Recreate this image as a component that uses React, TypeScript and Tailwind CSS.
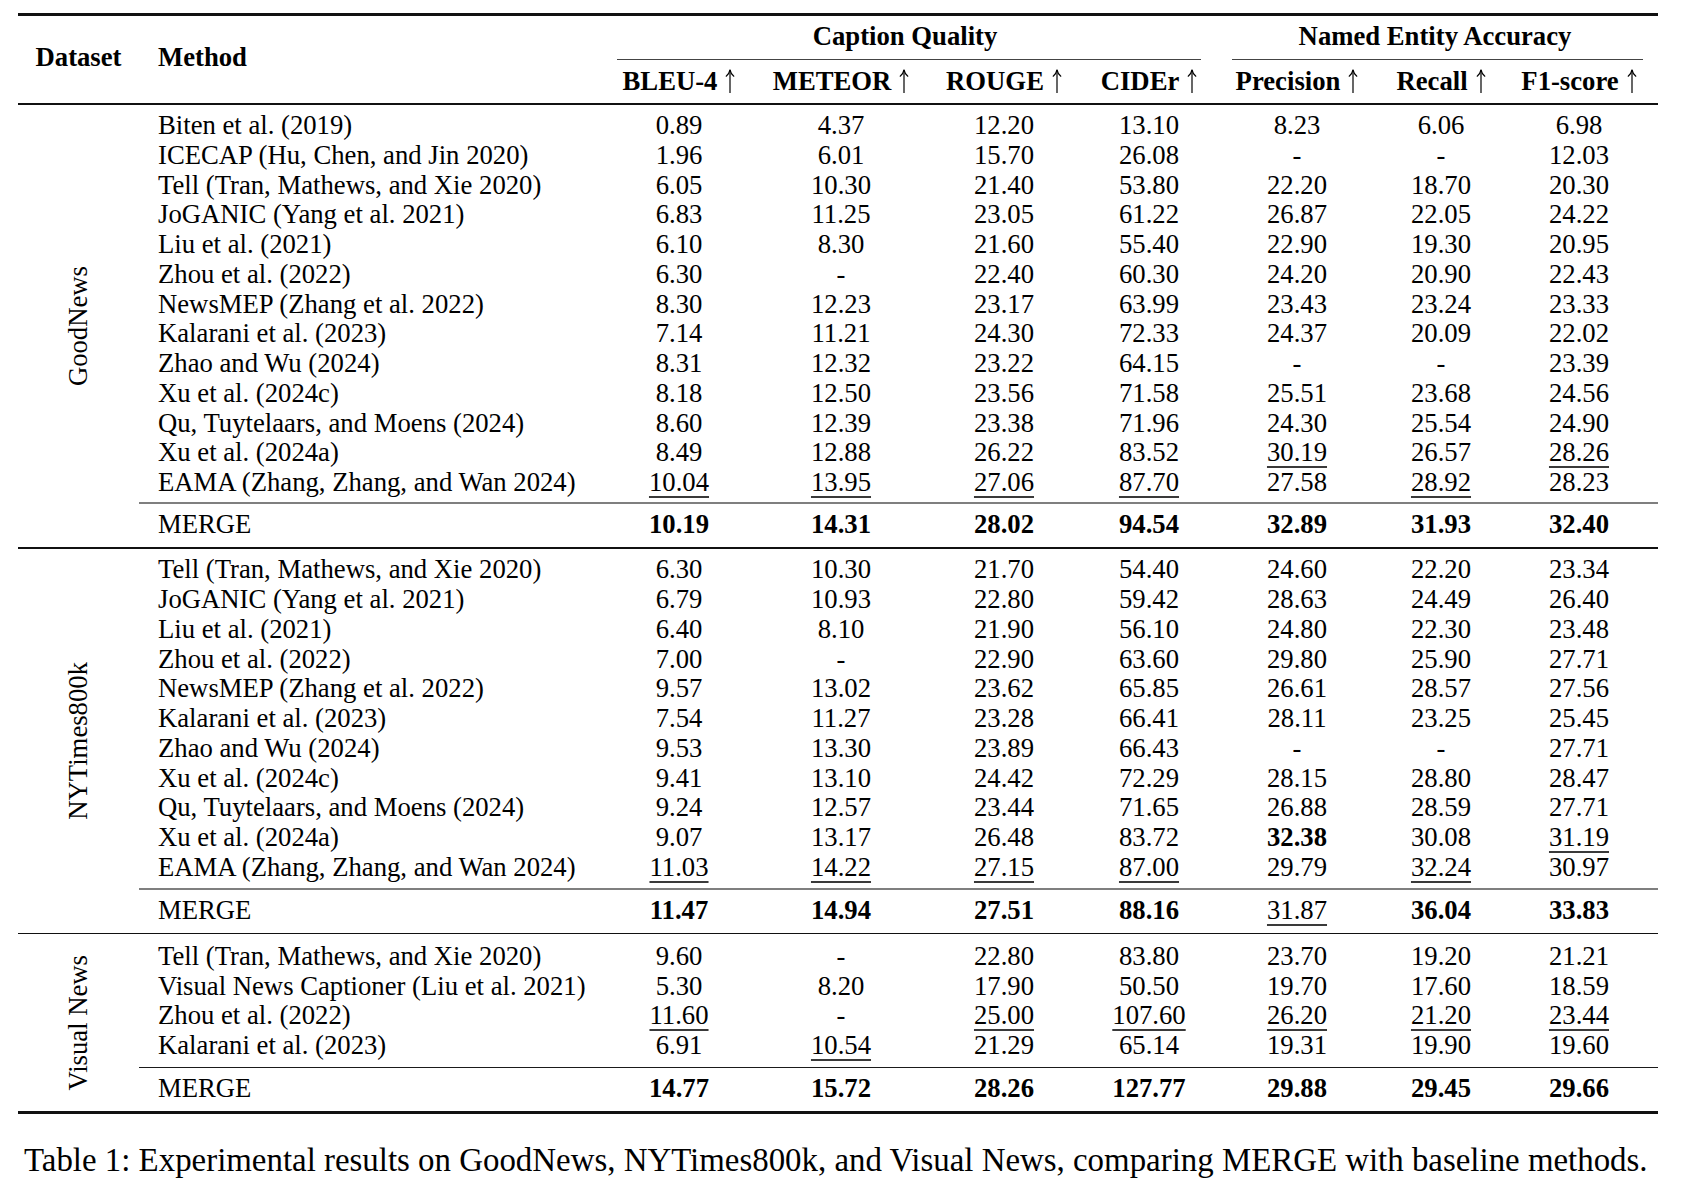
import React from "react";

const GRID = "grid grid-cols-[459px_162px_162px_164px_126px_170px_118px_158px]";

type RowData = [string, string[]];

const goodNews: RowData[] = [
  ["Biten et al. (2019)", ["0.89", "4.37", "12.20", "13.10", "8.23", "6.06", "6.98"]],
  ["ICECAP (Hu, Chen, and Jin 2020)", ["1.96", "6.01", "15.70", "26.08", "-", "-", "12.03"]],
  ["Tell (Tran, Mathews, and Xie 2020)", ["6.05", "10.30", "21.40", "53.80", "22.20", "18.70", "20.30"]],
  ["JoGANIC (Yang et al. 2021)", ["6.83", "11.25", "23.05", "61.22", "26.87", "22.05", "24.22"]],
  ["Liu et al. (2021)", ["6.10", "8.30", "21.60", "55.40", "22.90", "19.30", "20.95"]],
  ["Zhou et al. (2022)", ["6.30", "-", "22.40", "60.30", "24.20", "20.90", "22.43"]],
  ["NewsMEP (Zhang et al. 2022)", ["8.30", "12.23", "23.17", "63.99", "23.43", "23.24", "23.33"]],
  ["Kalarani et al. (2023)", ["7.14", "11.21", "24.30", "72.33", "24.37", "20.09", "22.02"]],
  ["Zhao and Wu (2024)", ["8.31", "12.32", "23.22", "64.15", "-", "-", "23.39"]],
  ["Xu et al. (2024c)", ["8.18", "12.50", "23.56", "71.58", "25.51", "23.68", "24.56"]],
  ["Qu, Tuytelaars, and Moens (2024)", ["8.60", "12.39", "23.38", "71.96", "24.30", "25.54", "24.90"]],
  ["Xu et al. (2024a)", ["8.49", "12.88", "26.22", "83.52", "_30.19", "26.57", "_28.26"]],
  ["EAMA (Zhang, Zhang, and Wan 2024)", ["_10.04", "_13.95", "_27.06", "_87.70", "27.58", "_28.92", "28.23"]],
];
const goodNewsMerge = ["*10.19", "*14.31", "*28.02", "*94.54", "*32.89", "*31.93", "*32.40"];

const nyt: RowData[] = [
  ["Tell (Tran, Mathews, and Xie 2020)", ["6.30", "10.30", "21.70", "54.40", "24.60", "22.20", "23.34"]],
  ["JoGANIC (Yang et al. 2021)", ["6.79", "10.93", "22.80", "59.42", "28.63", "24.49", "26.40"]],
  ["Liu et al. (2021)", ["6.40", "8.10", "21.90", "56.10", "24.80", "22.30", "23.48"]],
  ["Zhou et al. (2022)", ["7.00", "-", "22.90", "63.60", "29.80", "25.90", "27.71"]],
  ["NewsMEP (Zhang et al. 2022)", ["9.57", "13.02", "23.62", "65.85", "26.61", "28.57", "27.56"]],
  ["Kalarani et al. (2023)", ["7.54", "11.27", "23.28", "66.41", "28.11", "23.25", "25.45"]],
  ["Zhao and Wu (2024)", ["9.53", "13.30", "23.89", "66.43", "-", "-", "27.71"]],
  ["Xu et al. (2024c)", ["9.41", "13.10", "24.42", "72.29", "28.15", "28.80", "28.47"]],
  ["Qu, Tuytelaars, and Moens (2024)", ["9.24", "12.57", "23.44", "71.65", "26.88", "28.59", "27.71"]],
  ["Xu et al. (2024a)", ["9.07", "13.17", "26.48", "83.72", "*32.38", "30.08", "_31.19"]],
  ["EAMA (Zhang, Zhang, and Wan 2024)", ["_11.03", "_14.22", "_27.15", "_87.00", "29.79", "_32.24", "30.97"]],
];
const nytMerge = ["*11.47", "*14.94", "*27.51", "*88.16", "_31.87", "*36.04", "*33.83"];

const vn: RowData[] = [
  ["Tell (Tran, Mathews, and Xie 2020)", ["9.60", "-", "22.80", "83.80", "23.70", "19.20", "21.21"]],
  ["Visual News Captioner (Liu et al. 2021)", ["5.30", "8.20", "17.90", "50.50", "19.70", "17.60", "18.59"]],
  ["Zhou et al. (2022)", ["_11.60", "-", "_25.00", "_107.60", "_26.20", "_21.20", "_23.44"]],
  ["Kalarani et al. (2023)", ["6.91", "_10.54", "21.29", "65.14", "19.31", "19.90", "19.60"]],
];
const vnMerge = ["*14.77", "*15.72", "*28.26", "*127.77", "*29.88", "*29.45", "*29.66"];

function Cell({ v }: { v: string }) {
  if (v.startsWith("_")) {
    return (
      <div className="text-center">
        <span className="underline decoration-[1.5px] decoration-[#3a3a3a] underline-offset-[5px]">{v.slice(1)}</span>
      </div>
    );
  }
  if (v.startsWith("*")) {
    return <div className="text-center font-bold">{v.slice(1)}</div>;
  }
  return <div className="text-center">{v}</div>;
}

function Row({ name, vals }: { name: string; vals: string[] }) {
  return (
    <div className={`${GRID} h-[29.75px] leading-[29.75px]`}>
      <div className="pl-[19px] whitespace-nowrap">{name}</div>
      {vals.map((v, i) => (
        <Cell key={i} v={v} />
      ))}
    </div>
  );
}

function Section({
  label,
  rows,
  merge,
  grayRule,
  pt,
  pb,
}: {
  label: string;
  rows: RowData[];
  merge: string[];
  grayRule: boolean;
  pt: string;
  pb: string;
}) {
  return (
    <div className="flex">
      <div className="w-[121px] shrink-0 flex items-center justify-center">
        <span className="[writing-mode:vertical-rl] rotate-180 whitespace-nowrap leading-none">{label}</span>
      </div>
      <div className="flex-1 flex flex-col">
        <div className={`${pt} ${pb}`}>
          {rows.map(([n, v], i) => (
            <Row key={i} name={n} vals={v} />
          ))}
        </div>
        {grayRule ? (
          <div className="h-[2px] bg-[#7f7f7f]" />
        ) : (
          <div className="h-[1.2px] bg-[#1a1a1a]" />
        )}
        <div className="pt-[6.2px] pb-[7.3px]">
          <Row name="MERGE" vals={merge} />
        </div>
      </div>
    </div>
  );
}

function Arrow() {
  return (
    <svg
      width="10"
      height="24"
      viewBox="0 0 10 24"
      className="inline-block align-[-4px] ml-[8px]"
      fill="none"
      stroke="#000"
      strokeWidth="1.2"
      strokeLinecap="round"
    >
      <path d="M5 24 V1.2" />
      <path d="M1.2 7.2 Q4.2 4.6 5 0.8 Q5.8 4.6 8.8 7.2" />
    </svg>
  );
}

export default function App() {
  return (
    <div className="min-h-[1183px] w-[1681px] bg-white text-black font-['Liberation_Serif',serif] text-[26.7px]">
      <div className="pt-[13px] pl-[18px] w-[1658px]">
        <div className="h-[2.5px] bg-[#111]" />
        {/* Header */}
        <div className="grid grid-cols-[121px_459px_162px_162px_164px_126px_170px_118px_158px] grid-rows-[43px_1px_43.5px] font-bold">
          <div className="col-start-1 row-start-1 row-span-3 flex items-center justify-center pb-[5px]">Dataset</div>
          <div className="col-start-2 row-start-1 row-span-3 flex items-center pl-[19px] pb-[5px]">Method</div>
          <div className="col-start-3 col-span-4 row-start-1 flex items-center justify-center pb-[2px]">Caption Quality</div>
          <div className="col-start-7 col-span-3 row-start-1 flex items-center justify-center pb-[2px]">Named Entity Accuracy</div>
          <div className="col-start-3 col-span-4 row-start-2 ml-[19px] mr-[11px] bg-[#444]" />
          <div className="col-start-7 col-span-3 row-start-2 ml-[20px] mr-[15px] bg-[#444]" />
          <div className="col-start-3 row-start-3 flex items-center justify-center whitespace-nowrap">BLEU-4<Arrow /></div>
          <div className="col-start-4 row-start-3 flex items-center justify-center whitespace-nowrap">METEOR<Arrow /></div>
          <div className="col-start-5 row-start-3 flex items-center justify-center whitespace-nowrap">ROUGE<Arrow /></div>
          <div className="col-start-6 row-start-3 flex items-center justify-center whitespace-nowrap">CIDEr<Arrow /></div>
          <div className="col-start-7 row-start-3 flex items-center justify-center whitespace-nowrap">Precision<Arrow /></div>
          <div className="col-start-8 row-start-3 flex items-center justify-center whitespace-nowrap">Recall<Arrow /></div>
          <div className="col-start-9 row-start-3 flex items-center justify-center whitespace-nowrap">F1-score<Arrow /></div>
        </div>
        <div className="h-[1.5px] bg-[#111]" />
        <Section label="GoodNews" rows={goodNews} merge={goodNewsMerge} grayRule pt="pt-[6.5px]" pb="pb-[4.4px]" />
        <div className="h-[1.5px] bg-[#111]" />
        <Section label="NYTimes800k" rows={nyt} merge={nytMerge} grayRule pt="pt-[6.5px]" pb="pb-[5px]" />
        <div className="h-[1.5px] bg-[#111]" />
        <Section label="Visual News" rows={vn} merge={vnMerge} grayRule={false} pt="pt-[7.5px]" pb="pb-[6px]" />
        <div className="h-[2.5px] bg-[#111]" />
      </div>
      <div className="mt-[26px] pl-[24px] text-[32.9px] leading-[40px] whitespace-nowrap">
        Table 1: Experimental results on GoodNews, NYTimes800k, and Visual News, comparing MERGE with baseline methods.
      </div>
    </div>
  );
}
